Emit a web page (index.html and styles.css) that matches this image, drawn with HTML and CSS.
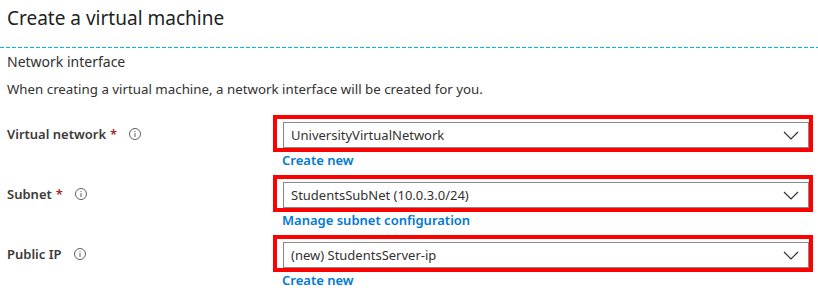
FILE: index.html
```html
<!DOCTYPE html>
<html>
<head>
<meta charset="utf-8">
<link rel="stylesheet" href="styles.css">
</head>
<body>
<div class="page">
  <h1 class="title">Create a virtual machine</h1>
  <div class="divider"></div>
  <div class="content">
    <h2 class="section">Network interface</h2>
    <p class="desc">When creating a virtual machine, a network interface will be created for you.</p>

    <div class="row">
      <div class="label">Virtual network <span class="req">*</span><span class="info"><svg width="12" height="12" viewBox="0 0 12 12"><circle cx="6" cy="6" r="5.5" fill="none" stroke="#605e5c" stroke-width="1"/><rect x="5.5" y="5" width="1" height="4" fill="#605e5c"/><rect x="5.5" y="3" width="1" height="1" fill="#605e5c"/></svg></span></div>
      <div class="field">
        <div class="annot">
          <div class="select"><span>UniversityVirtualNetwork</span><svg class="chev" width="16" height="9" viewBox="0 0 16 9"><path d="M1 1 L8 8 L15 1" fill="none" stroke="#323130" stroke-width="1.2"/></svg></div>
        </div>
        <a class="link">Create new</a>
      </div>
    </div>

    <div class="row">
      <div class="label">Subnet <span class="req">*</span><span class="info"><svg width="12" height="12" viewBox="0 0 12 12"><circle cx="6" cy="6" r="5.5" fill="none" stroke="#605e5c" stroke-width="1"/><rect x="5.5" y="5" width="1" height="4" fill="#605e5c"/><rect x="5.5" y="3" width="1" height="1" fill="#605e5c"/></svg></span></div>
      <div class="field">
        <div class="annot">
          <div class="select"><span>StudentsSubNet (10.0.3.0/24)</span><svg class="chev" width="16" height="9" viewBox="0 0 16 9"><path d="M1 1 L8 8 L15 1" fill="none" stroke="#323130" stroke-width="1.2"/></svg></div>
        </div>
        <a class="link">Manage subnet configuration</a>
      </div>
    </div>

    <div class="row">
      <div class="label">Public IP<span class="info"><svg width="12" height="12" viewBox="0 0 12 12"><circle cx="6" cy="6" r="5.5" fill="none" stroke="#605e5c" stroke-width="1"/><rect x="5.5" y="5" width="1" height="4" fill="#605e5c"/><rect x="5.5" y="3" width="1" height="1" fill="#605e5c"/></svg></span></div>
      <div class="field">
        <div class="annot">
          <div class="select"><span>(new) StudentsServer-ip</span><svg class="chev" width="16" height="9" viewBox="0 0 16 9"><path d="M1 1 L8 8 L15 1" fill="none" stroke="#323130" stroke-width="1.2"/></svg></div>
        </div>
        <a class="link">Create new</a>
      </div>
    </div>
  </div>
</div>
</body>
</html>
```
FILE: styles.css
```css
* { box-sizing: border-box; }
html, body { margin: 0; padding: 0; background: #fff; }
body {
  font-family: "Noto Sans", "Open Sans", sans-serif;
  color: #323130;
  width: 818px;
  height: 298px;
  overflow: hidden;
}
.title {
  margin: 0;
  padding: 6px 0 0 7px;
  height: 47px;
  font-size: 19px;
  font-weight: 400;
  line-height: 24px;
  color: #201f1e;
}
.divider {
  height: 1px;
  background: repeating-linear-gradient(to right, #00b7f3 0, #00b7f3 4px, transparent 4px, transparent 6px);
}
.content { padding-left: 7px; }
.section {
  margin: 0;
  padding-top: 4px;
  font-size: 14px;
  font-weight: 400;
  line-height: 20px;
  color: #323130;
}
.desc {
  margin: 8px 0 0 0;
  font-size: 13.3px;
  line-height: 18px;
  color: #323130;
}
.row {
  display: grid;
  grid-template-columns: 266px 540px;
  height: 60px;
}
.desc + .row { margin-top: 17px; }
.label {
  display: flex;
  align-items: center;
  height: 37px;
  font-size: 13px;
  font-weight: 600;
  color: #3b3a39;
}
.req { color: #a4262c; margin-left: 4px; }
.info { display: inline-flex; margin-left: 12px; }
.field { display: flex; flex-direction: column; }
.annot {
  border: 4px solid #ff0000;
  padding: 3px 0 0 6px;
  height: 37px;
}
.select {
  height: 26px;
  border: 1px solid #8a8886;
  display: flex;
  align-items: center;
  justify-content: space-between;
  padding: 0 9px 0 7px;
  font-size: 13px;
  color: #323130;
}
.chev { display: block; }
.link {
  color: #0078d4;
  font-size: 13px;
  font-weight: 600;
  line-height: 16px;
  padding-left: 9px;
}
```
